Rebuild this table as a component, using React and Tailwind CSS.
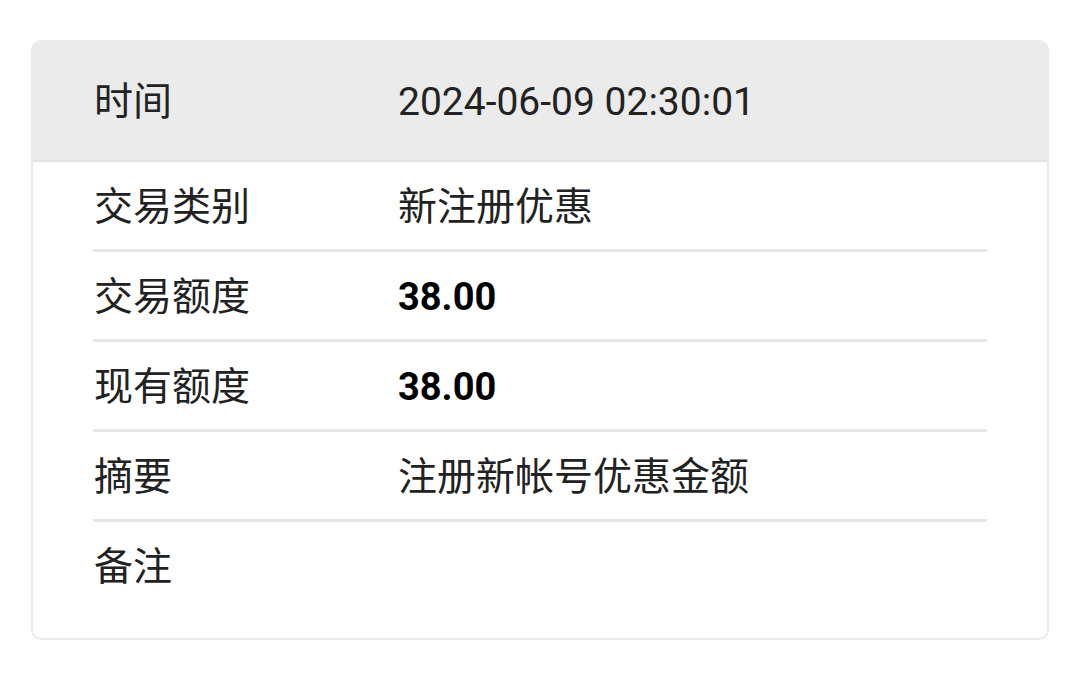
export default function App() {
  const rows = [
    { label: "交易类别", value: "新注册优惠" },
    { label: "交易额度", value: "38.00", bold: true },
    { label: "现有额度", value: "38.00", bold: true },
    { label: "摘要", value: "注册新帐号优惠金额" },
  ];
  const font = { fontFamily: "Roboto, 'Noto Sans CJK SC', sans-serif" };
  return (
    <div className="w-[1080px] h-[681px] bg-white pt-[40px] pl-[31px]" style={font}>
      <div className="w-[1018px] h-[600px] rounded-[10px] border-2 border-[#ebebeb] overflow-hidden flex flex-col">
        <div className="h-[120px] shrink-0 bg-[#ebebeb] border-b-2 border-[#e3e3e3] flex items-center px-[60px] pt-[3px] text-[39px] text-[#222]">
          <div className="w-[305px] pl-[1px]">时间</div>
          <div>2024-06-09 02:30:01</div>
        </div>
        <div className="px-[60px] flex flex-col">
          {rows.map((r, i) => (
            <div
              key={i}
              className="h-[90px] shrink-0 border-b-[3px] border-[#e6e6e6] flex items-center text-[39px] text-[#222]"
            >
              <div className="w-[305px] pl-[1px] pt-[3px]">{r.label}</div>
              <div className={r.bold ? "font-bold text-black pt-[3px] text-[38px]" : "pt-[3px]"}>{r.value}</div>
            </div>
          ))}
          <div className="h-[88px] shrink-0 flex items-center text-[39px] text-[#222]">
            <div className="w-[305px] pl-[1px] pt-[2px]">备注</div>
          </div>
        </div>
      </div>
    </div>
  );
}
